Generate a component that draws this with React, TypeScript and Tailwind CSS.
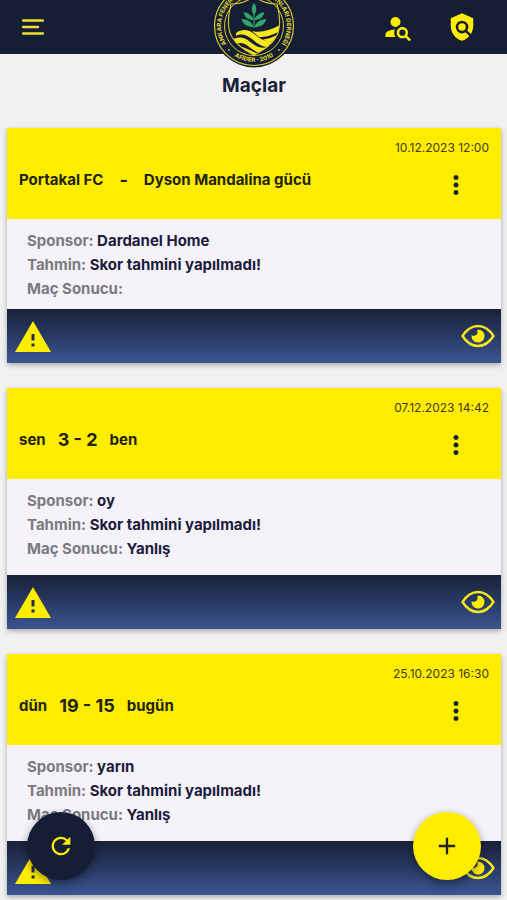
import { useState } from 'react'
import clsx from 'clsx'
import { MdAdd, MdMoreVert, MdPolicy, MdRefresh } from 'react-icons/md'

type Match = {
  id: number
  home: string
  away: string
  score?: string
  date: string
  sponsor: string
  prediction: string
  result?: string
}

const initialMatches: Match[] = [
  {
    id: 1,
    home: 'Portakal FC',
    away: 'Dyson Mandalina gücü',
    date: '10.12.2023 12:00',
    sponsor: 'Dardanel Home',
    prediction: 'Skor tahmini yapılmadı!'
  },
  {
    id: 2,
    home: 'sen',
    away: 'ben',
    score: '3 - 2',
    date: '07.12.2023 14:42',
    sponsor: 'oy',
    prediction: 'Skor tahmini yapılmadı!',
    result: 'Yanlış'
  },
  {
    id: 3,
    home: 'dün',
    away: 'bugün',
    score: '19 - 15',
    date: '25.10.2023 16:30',
    sponsor: 'yarın',
    prediction: 'Skor tahmini yapılmadı!',
    result: 'Yanlış'
  }
]

function Logo() {
  return (
    <svg viewBox="0 0 84 84" className="h-[84px] w-[84px]" role="img" aria-label="AFİDER">
      <defs>
        <path id="ring-left" d="M14.500 60A33 33 0 0 1 36 9.600" />
        <path id="ring-right" d="M48 9.600A33 33 0 0 1 69.500 60" />
        <path id="ring-bottom" d="M16 67A36.500 36.500 0 0 0 68 67" />
        <clipPath id="shield">
          <path d="M42 12C35 18 28 20 19 20C16 32 15 45 20 53C25 62 34 67 42 71C50 67 59 62 64 53C69 45 68 32 65 20C56 20 49 18 42 12Z" />
        </clipPath>
      </defs>
      <circle cx="42" cy="42" r="41.500" fill="#161e36" />
      <circle cx="42" cy="42" r="39.500" fill="none" stroke="#d8cb2c" strokeWidth="1.200" />
      <circle cx="42" cy="42" r="29.500" fill="none" stroke="#d8cb2c" strokeWidth="1" />
      <g clipPath="url(#shield)">
        <path d="M24 49C29 45 36 45 41 49C48 54 53 60 66 56V62C53 66 46 60 40 55C35 51 29 49 24 52Z" fill="#f8e71c" />
        <path d="M18 57C26 52 32 53 37 57C43 62 48 65 57 63V69C47 71 41 66 36 62C31 58 26 58 20 62Z" fill="#f8e71c" />
        <path d="M22 64C30 61 35 65 44 69V74H34Z" fill="#f8e71c" />
        <path d="M40 47C48 49 57 47 68 41V47C59 52 53 53 47 53Z" fill="#f8e71c" />
        <path d="M51 55.500C57 55 62 53 68 49V53C62 57 58 58 55 58Z" fill="#f8e71c" />
      </g>
      <path
        d="M42 12C35 18 28 20 19 20C16 32 15 45 20 53C25 62 34 67 42 71C50 67 59 62 64 53C69 45 68 32 65 20C56 20 49 18 42 12Z"
        fill="none"
        stroke="#d8cb2c"
        strokeWidth="1.100"
      />
      <g fill="#2fa66b">
        <path d="M41.400 27h1.200v17h-1.200z" />
        <path d="M42 19C45 23 45 27 42 31C39 27 39 23 42 19Z" />
        <path d="M41.500 36C36.500 36 33 34 31.500 28C36.500 29 41 32 41.500 36Z" />
        <path d="M42.500 36C47.500 36 51 34 52.500 28C47.500 29 43 32 42.500 36Z" />
        <path d="M41.500 43C35.500 43 31.500 41 29.500 35C35.500 35 40 38 41.500 43Z" />
        <path d="M42.500 43C48.500 43 52.500 41 54.500 35C48.500 35 44 38 42.500 43Z" />
      </g>
      <g fill="#d8cb2c">
        <circle cx="17" cy="66" r="0.900" />
        <circle cx="67" cy="66" r="0.900" />
      </g>
      <g fill="#d8cb2c" fontFamily="Inter, sans-serif" fontSize="6" fontWeight="800">
        <text>
          <textPath href="#ring-left">ANKARA FENERB</textPath>
        </text>
        <text textAnchor="end">
          <textPath href="#ring-right" startOffset="100%">ANLARI DERNEĞİ</textPath>
        </text>
        <text textAnchor="middle">
          <textPath href="#ring-bottom" startOffset="50%">AFİDER · 2010</textPath>
        </text>
      </g>
    </svg>
  )
}

function PersonSearchIcon() {
  return (
    <svg viewBox="0 0 24 24" fill="currentColor" className="h-[30px] w-[30px]">
      <path d="M15.5,12C18,12 20,14 20,16.5C20,17.38 19.75,18.21 19.31,18.9L22.39,22L21,23.39L17.88,20.32C17.19,20.75 16.37,21 15.5,21C13,21 11,19 11,16.5C11,14 13,12 15.5,12M15.5,14A2.5,2.5 0 0,0 13,16.5A2.5,2.5 0 0,0 15.5,19A2.5,2.5 0 0,0 18,16.5A2.5,2.5 0 0,0 15.5,14M10,4A4,4 0 0,1 14,8C14,8.91 13.69,9.75 13.18,10.43C12.32,10.75 11.55,11.26 10.91,11.9L10,12A4,4 0 0,1 6,8A4,4 0 0,1 10,4M2,20V18C2,15.88 5.31,14.14 9.5,14C9.18,14.78 9,15.62 9,16.5C9,17.79 9.38,19 10,20H2Z" />
    </svg>
  )
}

function WarningIcon() {
  return (
    <svg viewBox="0 0 36 31" className="h-[31px] w-9">
      <path d="M18 0L36 31H0Z" fill="#ffed00" />
      <path d="M16.500 13h3v6.500h-3zM16.500 22.500h3v3h-3z" fill="#1f2d52" />
    </svg>
  )
}

function EyeIcon() {
  return (
    <svg viewBox="0 0 34 24" className="h-6 w-[34px]">
      <path
        d="M1.500 12C6 5 11 2 17 2S28 5 32.500 12C28 19 23 22 17 22S6 19 1.500 12Z"
        fill="none"
        stroke="#f3e81f"
        strokeWidth="2.400"
        strokeLinejoin="round"
      />
      <path d="M17 5.500A6.500 6.500 0 1 1 10.600 11A3.600 3.600 0 0 0 16.200 6.800Z" fill="#ffed00" />
    </svg>
  )
}

function MatchCard({ match }: { match: Match }) {
  return (
    <article className="bg-[#f5f3f9] shadow-[0_2px_5px_rgba(0,0,0,0.3)]">
      <header className="flex h-[91px] flex-col bg-[#ffed00] px-3">
        <time className="pt-3 text-right text-xs leading-4 text-[#3f3c14]">{match.date}</time>
        <div className="flex items-start justify-between pt-3">
          <h2 className="flex items-center text-[15px] leading-6 font-bold text-[#22230f]">
            <span>{match.home}</span>
            <span className={clsx('text-lg leading-6', match.score ? 'px-3' : 'px-4')}>{match.score ?? '-'}</span>
            <span>{match.away}</span>
          </h2>
          <button type="button" aria-label="Seçenekler" className="mt-0.5 mr-[18px] text-[#10253f]">
            <MdMoreVert className="h-[30px] w-[30px]" />
          </button>
        </div>
      </header>

      <div className={clsx('px-5 pt-[10px] text-[15px] leading-6 font-bold text-[#1c1c3c]', match.result ? 'pb-[14px]' : 'pb-2')}>
        <p><span className="text-[#7b7a80]">Sponsor:</span> {match.sponsor}</p>
        <p><span className="text-[#7b7a80]">Tahmin:</span> {match.prediction}</p>
        <p><span className="text-[#7b7a80]">Maç Sonucu:</span> {match.result}</p>
      </div>

      <footer className="flex h-[54px] items-center justify-between bg-linear-to-b from-[#182139] to-[#3b5592] pr-1.5 pl-2">
        <button type="button" aria-label="Bildir"><WarningIcon /></button>
        <button type="button" aria-label="Görüntüle"><EyeIcon /></button>
      </footer>
    </article>
  )
}

export default function App() {
  const [matches, setMatches] = useState<Match[]>(initialMatches)

  return (
    <div className="min-h-screen bg-[#f1f1f1] font-['Inter',sans-serif]">
      <header className="relative flex h-[54px] items-center justify-between bg-[#161e36] pr-[30px] pl-[22px]">
        <button type="button" aria-label="Menü">
          <svg viewBox="0 0 22 16" className="h-4 w-[22px]">
            <path d="M1 1.500h20M1 8h15M1 14.500h20" stroke="#eee032" strokeWidth="2.400" strokeLinecap="round" />
          </svg>
        </button>
        <div className="absolute -bottom-[14px] left-1/2 -translate-x-1/2">
          <Logo />
        </div>
        <div className="flex items-center gap-[34px] text-[#ffed00]">
          <button type="button" aria-label="Üye ara"><PersonSearchIcon /></button>
          <button type="button" aria-label="Denetim"><MdPolicy className="h-[30px] w-[30px]" /></button>
        </div>
      </header>

      <main className="pt-4 pr-1.5 pb-1 pl-[7px]">
        <h1 className="text-center text-[19px] leading-8 font-bold text-[#1a1f3a]">Maçlar</h1>
        <div className="flex flex-col gap-[25px] pt-[26px]">
          {matches.map(match => (
            <MatchCard key={match.id} match={match} />
          ))}
        </div>
      </main>

      <button
        type="button"
        aria-label="Yenile"
        onClick={() => setMatches([...initialMatches])}
        className="fixed bottom-5 left-[27px] flex h-[68px] w-[68px] items-center justify-center rounded-full bg-[#161e36] text-[#ffed00] shadow-[0_3px_8px_rgba(0,0,0,0.4)]"
      >
        <MdRefresh className="h-7 w-7" />
      </button>
      <button
        type="button"
        aria-label="Maç ekle"
        className="fixed right-[26px] bottom-5 flex h-[68px] w-[68px] items-center justify-center rounded-full bg-[#ffed00] text-[#22230f] shadow-[0_3px_8px_rgba(0,0,0,0.4)]"
      >
        <MdAdd className="h-7 w-7" />
      </button>
    </div>
  )
}
